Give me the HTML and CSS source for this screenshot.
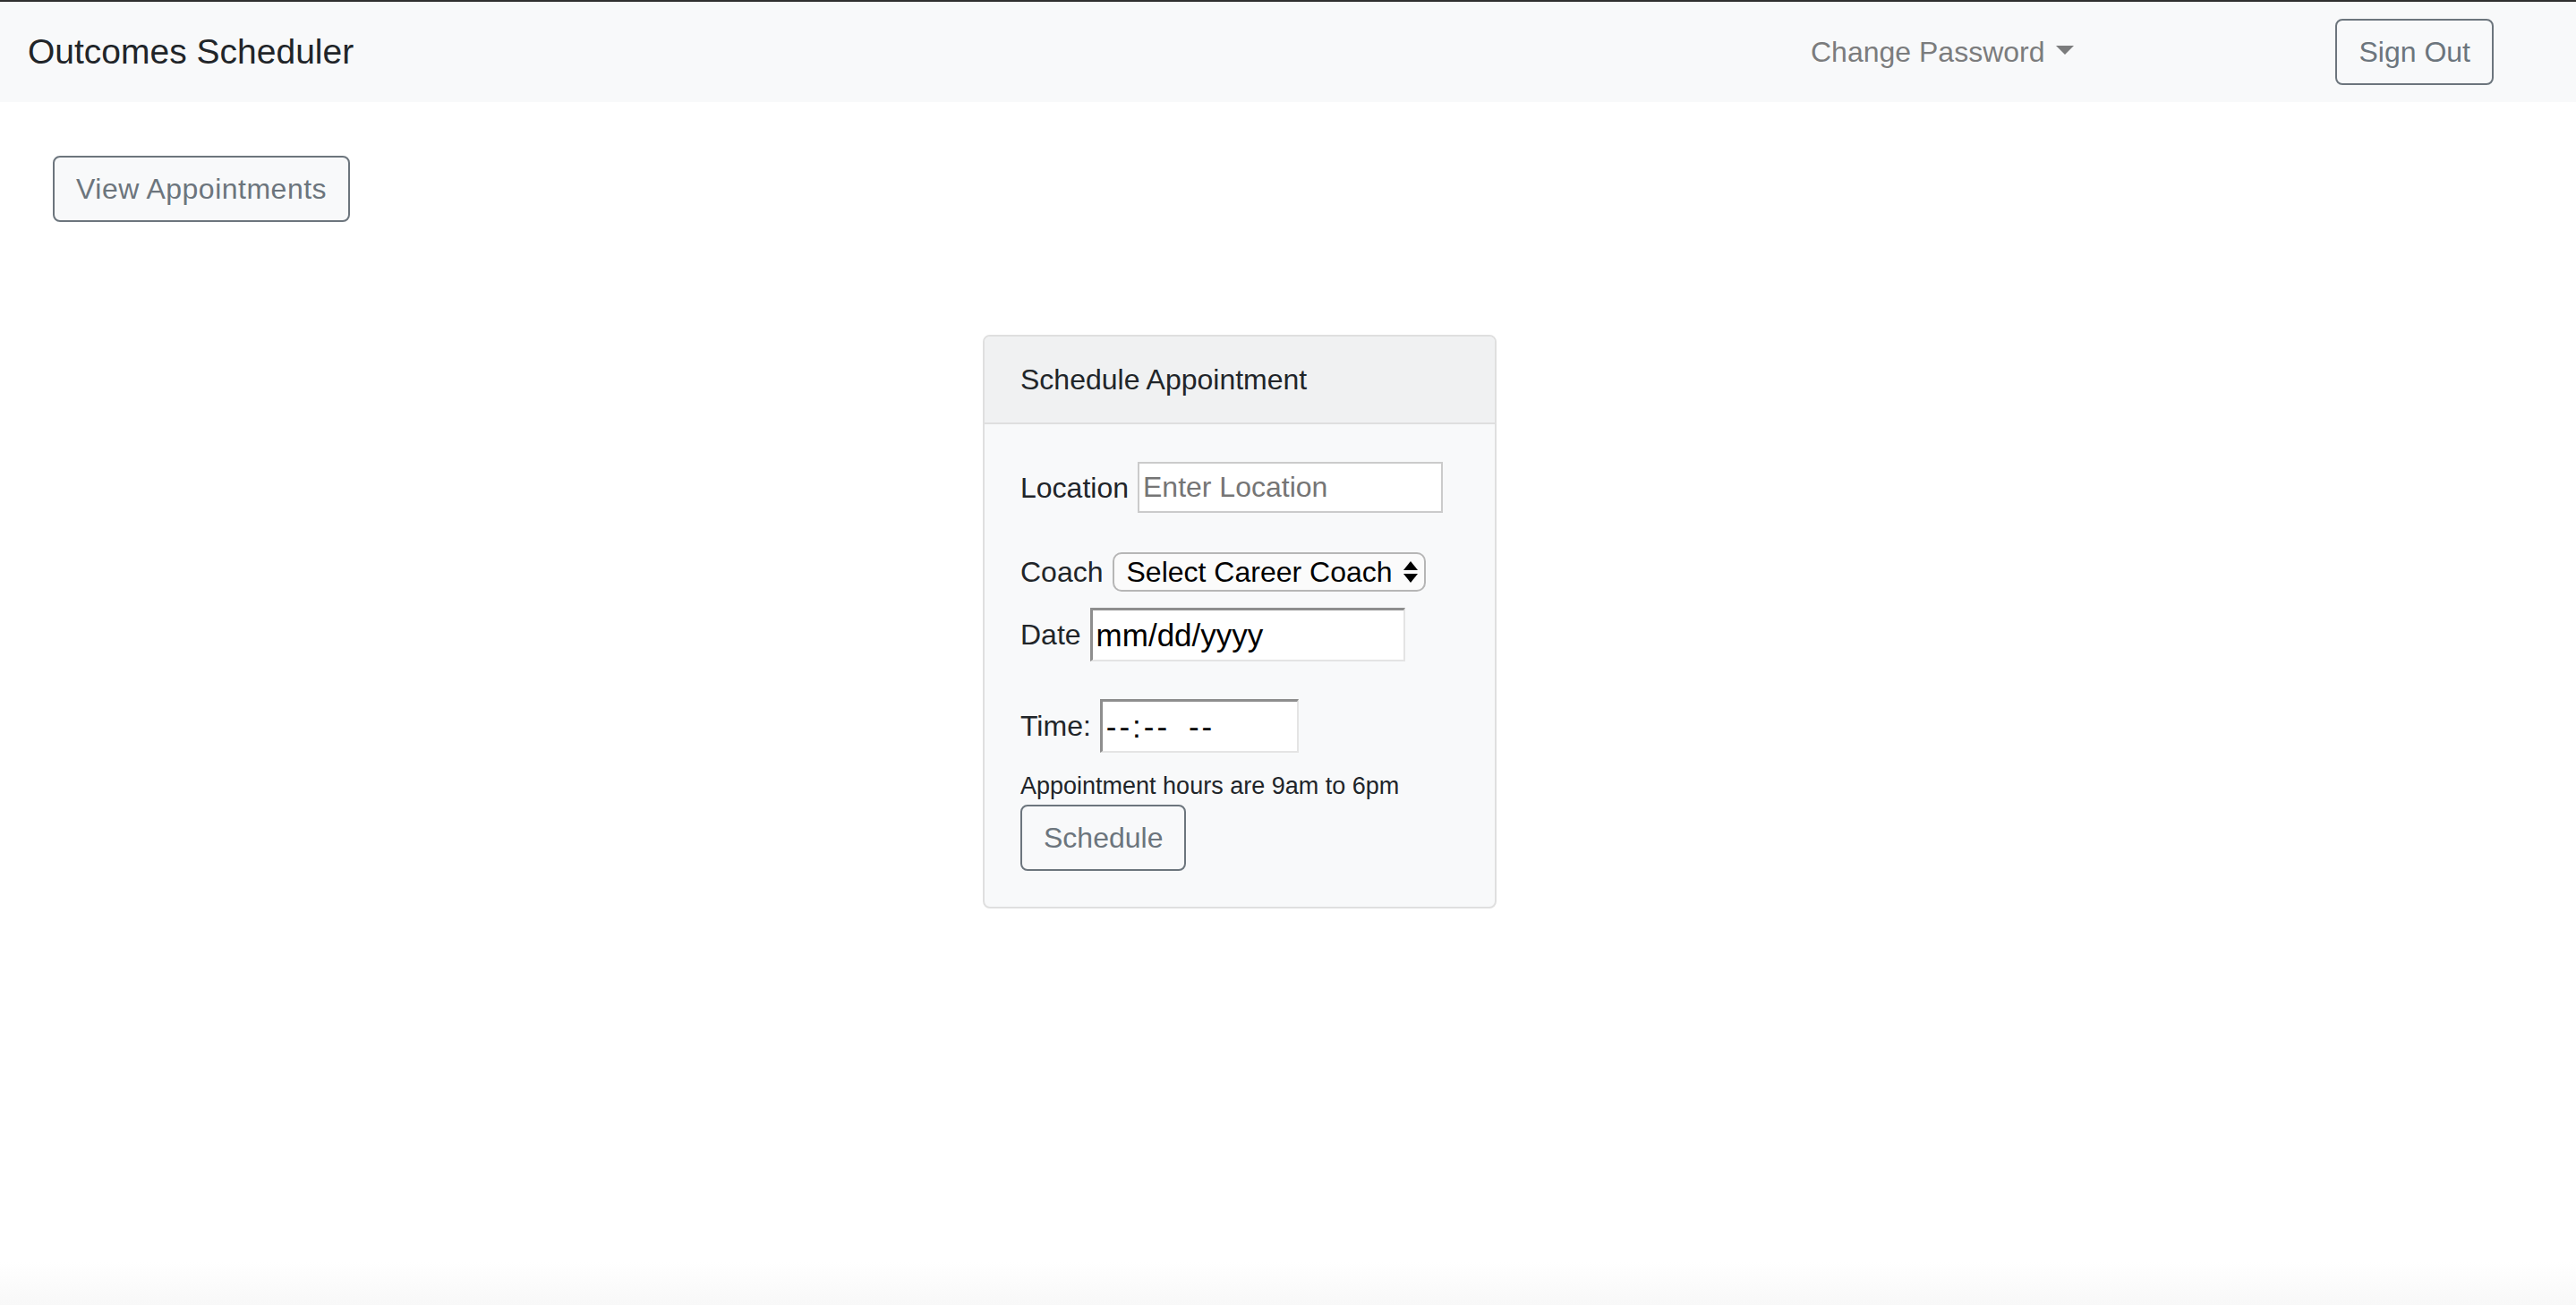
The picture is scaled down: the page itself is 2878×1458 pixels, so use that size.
FILE: index.html
```html
<!DOCTYPE html>
<html lang="en">
<head>
<meta charset="utf-8">
<title>Outcomes Scheduler</title>
<link rel="stylesheet" href="styles.css">
</head>
<body>
<nav class="navbar">
  <span class="brand">Outcomes Scheduler</span>
  <div class="nav-right">
    <a class="nav-link dropdown-toggle">Change Password</a>
    <button class="btn btn-outline signout" type="button">Sign Out</button>
  </div>
</nav>
<main class="page">
  <div class="toolbar">
    <button class="btn btn-outline btn-view" type="button">View Appointments</button>
  </div>
  <div class="card-wrap">
    <section class="card">
      <div class="card-header">Schedule Appointment</div>
      <form class="card-body">
        <div class="row row-location">
          <label class="field-label">Location</label>
          <input class="text-input" type="text" placeholder="Enter Location">
        </div>
        <div class="row row-coach">
          <label class="field-label">Coach</label>
          <span class="select-wrap">
            <select class="select"><option>Select Career Coach</option></select>
            <svg class="select-arrows" width="18" height="26" viewBox="0 0 18 26"><polygon points="9,1 17,11 1,11" fill="#000"/><polygon points="1,15 17,15 9,25" fill="#000"/></svg>
          </span>
        </div>
        <div class="row row-date">
          <label class="field-label">Date</label>
          <input class="inset-input date-input" type="text" value="mm/dd/yyyy">
        </div>
        <div class="row row-time">
          <label class="field-label">Time:</label>
          <input class="inset-input time-input" type="text" value="--:-- --">
        </div>
        <p class="hint">Appointment hours are 9am to 6pm</p>
        <button class="btn btn-outline schedule" type="button">Schedule</button>
      </form>
    </section>
  </div>
</main>
</body>
</html>
```
FILE: styles.css
```css
html {
  height: 100%;
  background: linear-gradient(#ffffff calc(100% - 48px), #f8f8f8);
}
body {
  margin: 0;
  min-height: 100%;
  font-family: "Liberation Sans", Arial, sans-serif;
  color: #212529;
}
.navbar {
  display: flex;
  align-items: center;
  height: 112px;
  border-top: 2px solid #2f2f2f;
  background: #f8f9fa;
  padding: 0 92px 0 31px;
}
.brand {
  font-size: 39px;
  line-height: 58px;
  color: #212529;
}
.nav-right {
  margin-left: auto;
  display: flex;
  align-items: center;
}
.nav-link {
  font-size: 32px;
  line-height: 48px;
  color: #7b7c7d;
  cursor: pointer;
}
.dropdown-toggle::after {
  content: "";
  display: inline-block;
  margin-left: 13px;
  vertical-align: 8px;
  border-top: 10px solid #7b7c7d;
  border-left: 10px solid transparent;
  border-right: 10px solid transparent;
}
.btn {
  display: inline-block;
  font-family: "Liberation Sans", Arial, sans-serif;
  font-size: 32px;
  line-height: 48px;
  padding: 11px 24px;
  border: 2px solid #6c757d;
  border-radius: 8px;
  color: #6c757d;
  background: transparent;
  cursor: pointer;
}
.signout {
  margin-left: 292px;
}
.toolbar {
  padding: 60px 0 0 59px;
}
.btn-view {
  background: #f8f9fa;
  letter-spacing: 0.5px;
}
.card-wrap {
  display: flex;
  justify-content: center;
  padding-right: 108px;
  margin-top: 126px;
}
.card {
  width: 574px;
  box-sizing: border-box;
  border: 2px solid #dfdfdf;
  border-radius: 8px;
  background: #f8f9fa;
  overflow: hidden;
}
.card-header {
  padding: 24px 40px;
  font-size: 32px;
  line-height: 48px;
  background: #f0f1f2;
  border-bottom: 2px solid #dfdfdf;
}
.card-body {
  margin: 0;
  padding: 40px;
}
.row {
  display: flex;
  align-items: center;
  gap: 10px;
}
.field-label {
  font-size: 32px;
  line-height: 48px;
  color: #212529;
}
.row-location {
  padding-top: 2px;
}
.text-input {
  width: 341px;
  height: 57px;
  box-sizing: border-box;
  border: 2px solid #cbcbcb;
  background: #fff;
  font-family: "Liberation Sans", Arial, sans-serif;
  font-size: 32px;
  padding: 0 4px;
  color: #000;
  outline: none;
}
.text-input::placeholder {
  color: #757575;
}
.row-coach {
  margin-top: 42px;
}
.select-wrap {
  position: relative;
  display: inline-flex;
}
.select {
  appearance: none;
  -webkit-appearance: none;
  width: 350px;
  height: 44px;
  box-sizing: border-box;
  border: 2px solid #b6b6b6;
  border-radius: 10px;
  background: #fbfbfb;
  font-family: "Liberation Sans", Arial, sans-serif;
  font-size: 32px;
  line-height: 40px;
  color: #000;
  padding: 0 0 0 14px;
}
.select-arrows {
  position: absolute;
  right: 8px;
  top: 9px;
  pointer-events: none;
}
.row-date {
  margin-top: 16px;
}
.row-time {
  margin-top: 42px;
}
.inset-input {
  box-sizing: border-box;
  height: 60px;
  border-style: solid;
  border-width: 3px 2px 2px 3px;
  border-color: #8e8e8e #e4e4e4 #e4e4e4 #8e8e8e;
  background: #fff;
  font-family: "Liberation Sans", Arial, sans-serif;
  font-size: 35px;
  color: #000;
  padding: 0 4px;
  outline: none;
}
.date-input {
  width: 352px;
}
.time-input {
  width: 222px;
  letter-spacing: 3px;
  word-spacing: 8px;
}
.hint {
  margin: 0;
  padding-top: 22px;
  font-size: 27px;
  line-height: 30px;
  color: #212529;
}
.schedule {
  display: block;
  margin-top: 6px;
}
```
